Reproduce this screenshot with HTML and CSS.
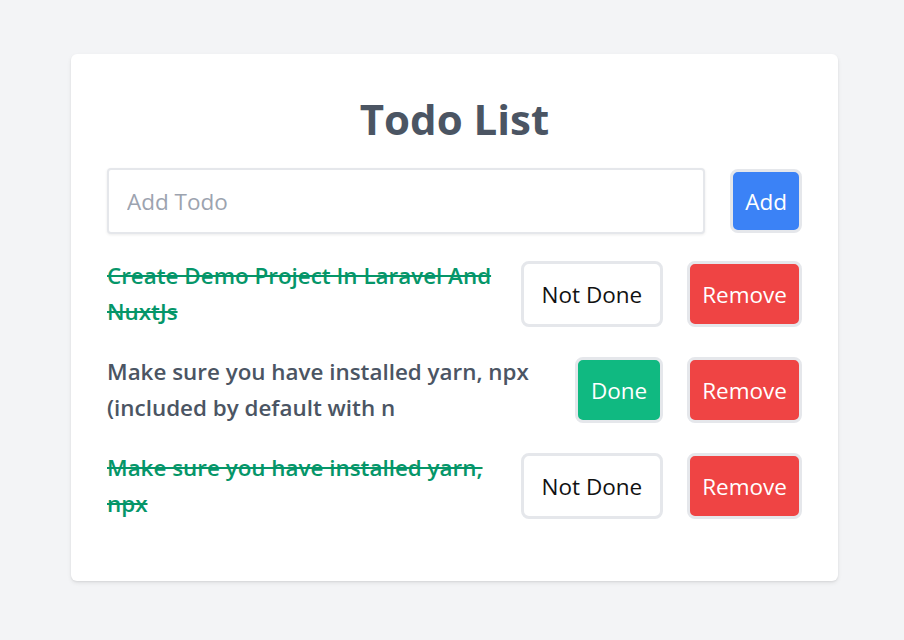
FILE: index.html
```html
<!DOCTYPE html>
<html lang="en">
<head>
<meta charset="utf-8">
<title>Todo List</title>
<link rel="stylesheet" href="styles.css">
</head>
<body>
<main class="page">
  <section class="card">
    <h1 class="title">Todo List</h1>
    <form class="add-row">
      <input class="add-input" type="text" placeholder="Add Todo">
      <button class="btn btn-blue" type="button">Add</button>
    </form>
    <ul class="list">
      <li class="item">
        <p class="text done">Create Demo Project In Laravel And NuxtJs</p>
        <button class="btn btn-white" type="button">Not Done</button>
        <button class="btn btn-red" type="button">Remove</button>
      </li>
      <li class="item">
        <p class="text">Make sure you have installed yarn, npx (included by default with n</p>
        <button class="btn btn-green" type="button">Done</button>
        <button class="btn btn-red" type="button">Remove</button>
      </li>
      <li class="item">
        <p class="text done">Make sure you have installed yarn, npx</p>
        <button class="btn btn-white" type="button">Not Done</button>
        <button class="btn btn-red" type="button">Remove</button>
      </li>
    </ul>
  </section>
</main>
</body>
</html>
```
FILE: styles.css
```css
* { box-sizing: border-box; }
html, body { margin: 0; padding: 0; }
body {
  background: #f3f4f6;
  font-family: "Open Sans", "Noto Sans", sans-serif;
  width: 904px;
  height: 640px;
}
.page {
  padding: 54px 66px 0 71px;
}
.card {
  width: 767px;
  height: 527px;
  background: #fff;
  border-radius: 6px;
  box-shadow: 0 2px 4px rgba(0,0,0,0.08), 0 1px 2px rgba(0,0,0,0.06);
  padding: 36px 36px 36px 36px;
}
.title {
  margin: 0 0 20px 0;
  text-align: center;
  font-size: 42px;
  line-height: 58px;
  font-weight: 700;
  color: #4b5563;
}
.add-row {
  display: flex;
  align-items: center;
  gap: 25px;
  margin: 0 0 24px 0;
}
.add-input {
  flex: 1;
  height: 66px;
  border: 2px solid #e5e7eb;
  border-radius: 4px;
  box-shadow: 0 1px 3px rgba(0,0,0,0.08);
  padding: 0 18px;
  font-family: inherit;
  font-size: 22.5px;
  color: #374151;
  outline: none;
}
.add-input::placeholder { color: #9ca3af; }
.list {
  list-style: none;
  margin: 0;
  padding: 0;
  display: flex;
  flex-direction: column;
  gap: 24px;
}
.item {
  display: flex;
  align-items: center;
  gap: 24px;
}
.text {
  flex: 1;
  margin: 0;
  font-size: 22.4px;
  line-height: 36px;
  font-weight: 600;
  color: #4b5563;
}
.text.done {
  color: #059669;
  text-decoration: line-through;
  text-decoration-thickness: 2px;
}
.btn {
  height: 66px;
  padding: 0 12px;
  border: 3px solid #e5e7eb;
  border-radius: 8px;
  font-family: inherit;
  font-size: 22.5px;
  color: #fff;
  cursor: pointer;
  flex: none;
}
.btn-blue { background: #3b82f6; height: 64px; padding: 0 12px; }
.btn-red { background: #ef4444; }
.btn-green { background: #10b981; padding: 0 13px; }
.btn-white { background: #fff; color: #111; padding: 0 18px; }
```
